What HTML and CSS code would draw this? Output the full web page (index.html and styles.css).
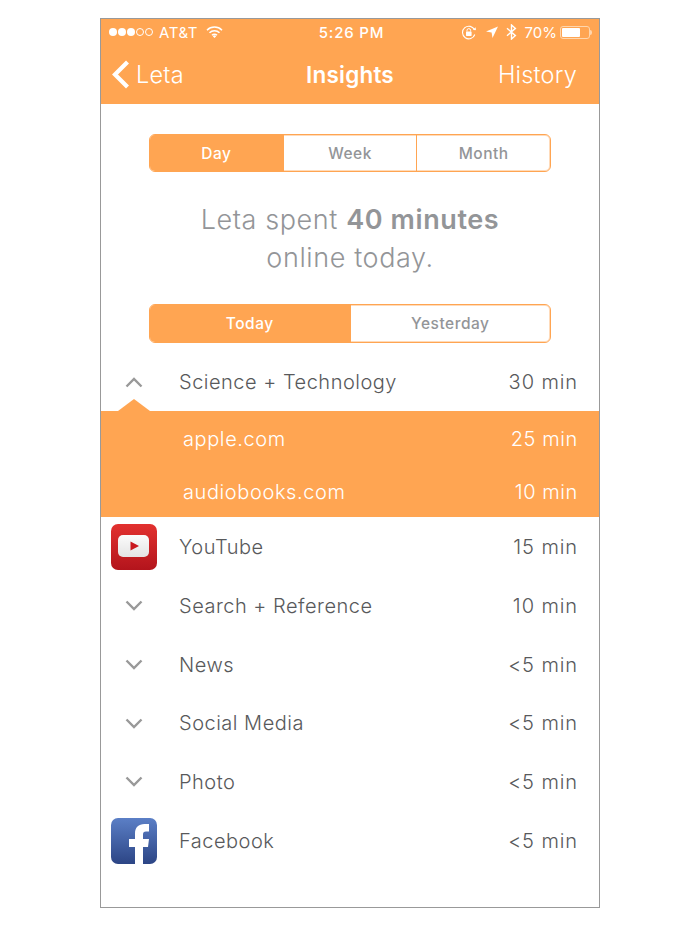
FILE: index.html
```html
<!DOCTYPE html>
<html lang="en">
<head>
    <meta charset="UTF-8">
    <meta name="viewport" content="width=device-width, initial-scale=1.0">
    <title>Insights</title>
    <link rel="stylesheet" href="styles.css">
</head>
<body>
    <div class="phone">
        <div class="header">
            <div class="status">
                <div class="status-left">
                    <span class="dots">
                        <i class="dot"></i><i class="dot"></i><i class="dot"></i><i class="dot off"></i><i class="dot off"></i>
                    </span>
                    <span class="carrier">AT&amp;T</span>
                    <svg class="wifi" width="17" height="12" viewBox="0 0 17 12">
                        <path d="M1 4.2a10.6 10.6 0 0 1 15 0M3.5 6.8a7 7 0 0 1 10 0M6 9.2a3.5 3.5 0 0 1 5 0" fill="none" stroke="#fff" stroke-width="1.5"/>
                        <path d="M8.5 12l-1.7-1.8a2.4 2.4 0 0 1 3.4 0z" fill="#fff"/>
                    </svg>
                </div>
                <div class="status-time">5:26 PM</div>
                <div class="status-right">
                    <svg width="16" height="15" viewBox="0 0 16 15">
                        <path d="M13.8 9.5A6.3 6.3 0 1 1 13.6 5" fill="none" stroke="#fff" stroke-width="1.1"/>
                        <path d="M12 4.6l3 .6-.4-3z" fill="#fff"/>
                        <rect x="5" y="6.5" width="5.6" height="4.4" rx=".6" fill="#fff"/>
                        <path d="M6 6.5V5.4a1.8 1.8 0 0 1 3.6 0v1.1" fill="none" stroke="#fff" stroke-width="1"/>
                    </svg>
                    <svg class="arrow" width="12" height="12" viewBox="0 0 12 12">
                        <path d="M12 .5L0 5.6l5.6.9.9 5.5z" fill="#fff"/>
                    </svg>
                    <svg class="bt" width="11" height="16" viewBox="0 0 11 16">
                        <path d="M1 4.2l8.4 7.4L5.5 15V1l3.9 3.4L1 11.8" fill="none" stroke="#fff" stroke-width="1.4"/>
                    </svg>
                    <span>70%</span>
                    <div class="battery"><div class="battery-fill"></div></div>
                </div>
            </div>
            <div class="nav">
                <div class="nav-back">
                    <svg width="19" height="29" viewBox="0 0 19 29">
                        <path d="M16.5 2L4 14.5 16.5 27" fill="none" stroke="#fff" stroke-width="4.2"/>
                    </svg>
                    <span>Leta</span>
                </div>
                <div class="nav-title">Insights</div>
                <div class="nav-link">History</div>
            </div>
        </div>

        <div class="seg seg-range">
            <div class="seg-item active">Day</div>
            <div class="seg-item">Week</div>
            <div class="seg-item">Month</div>
        </div>

        <p class="summary">Leta spent <strong>40 minutes</strong><br>online today.</p>

        <div class="seg seg-day">
            <div class="seg-item active">Today</div>
            <div class="seg-item">Yesterday</div>
        </div>

        <div class="list">
            <div class="row">
                <div class="row-icon">
                    <svg class="chevron" width="18" height="11" viewBox="0 0 18 11"><path d="M1.5 9.5L9 2l7.5 7.5"/></svg>
                </div>
                <span class="row-name">Science + Technology</span>
                <span class="row-time">30 min</span>
            </div>

            <div class="detail">
                <div class="detail-row"><span>apple.com</span><span>25 min</span></div>
                <div class="detail-row"><span>audiobooks.com</span><span>10 min</span></div>
            </div>

            <div class="rows-rest">
                <div class="row">
                    <div class="row-icon">
                        <svg width="46" height="46" viewBox="0 0 46 46">
                            <defs>
                                <linearGradient id="yt" x1="0" y1="0" x2="0" y2="1">
                                    <stop offset="0" stop-color="#e2312f"/>
                                    <stop offset="1" stop-color="#b3141c"/>
                                </linearGradient>
                                <linearGradient id="ytw" x1="0" y1="0" x2="0" y2="1">
                                    <stop offset="0" stop-color="#fbfbfb"/>
                                    <stop offset="1" stop-color="#e4e4e4"/>
                                </linearGradient>
                                <linearGradient id="fb" x1="0" y1="0" x2="0" y2="1">
                                    <stop offset="0" stop-color="#5b7fc6"/>
                                    <stop offset="1" stop-color="#2c4585"/>
                                </linearGradient>
                            </defs>
                            <rect width="46" height="46" rx="7" fill="url(#yt)"/>
                            <rect x="7" y="11" width="31" height="22" rx="5" fill="url(#ytw)"/>
                            <path d="M19.5 17.5l8.5 4.5-8.5 4.5z" fill="#c9171e"/>
                        </svg>
                    </div>
                    <span class="row-name">YouTube</span>
                    <span class="row-time">15 min</span>
                </div>
                <div class="row">
                    <div class="row-icon">
                        <svg class="chevron" width="18" height="11" viewBox="0 0 18 11"><path d="M1.5 1.5L9 9l7.5-7.5"/></svg>
                    </div>
                    <span class="row-name">Search + Reference</span>
                    <span class="row-time">10 min</span>
                </div>
                <div class="row">
                    <div class="row-icon">
                        <svg class="chevron" width="18" height="11" viewBox="0 0 18 11"><path d="M1.5 1.5L9 9l7.5-7.5"/></svg>
                    </div>
                    <span class="row-name">News</span>
                    <span class="row-time">&lt;5 min</span>
                </div>
                <div class="row">
                    <div class="row-icon">
                        <svg class="chevron" width="18" height="11" viewBox="0 0 18 11"><path d="M1.5 1.5L9 9l7.5-7.5"/></svg>
                    </div>
                    <span class="row-name">Social Media</span>
                    <span class="row-time">&lt;5 min</span>
                </div>
                <div class="row">
                    <div class="row-icon">
                        <svg class="chevron" width="18" height="11" viewBox="0 0 18 11"><path d="M1.5 1.5L9 9l7.5-7.5"/></svg>
                    </div>
                    <span class="row-name">Photo</span>
                    <span class="row-time">&lt;5 min</span>
                </div>
                <div class="row">
                    <div class="row-icon">
                        <svg width="46" height="46" viewBox="0 0 46 46">
                            <rect width="46" height="46" rx="7" fill="url(#fb)"/>
                            <path d="M24 46V29h-6v-8h6v-5.5C24 9.500 27.500 6 33.500 6H38v7.500h-3c-2.200 0-3 1-3 3V21h6l-1 8h-5v17z" fill="#fff"/>
                        </svg>
                    </div>
                    <span class="row-name">Facebook</span>
                    <span class="row-time">&lt;5 min</span>
                </div>
            </div>
        </div>
    </div>
</body>
</html>
```

FILE: styles.css
```css
body {
    margin: 0;
    background: #fff;
    font-family: Inter, "Open Sans", sans-serif;
    color: #58595b;
}
.phone {
    box-sizing: border-box;
    width: 500px;
    height: 890px;
    margin: 18px auto 0;
    border: 1px solid #999;
    overflow: hidden;
}
.header {
    background: #ffa552;
    color: #fff;
}
.status {
    height: 26px;
    padding: 0 5px 0 8px;
    display: grid;
    grid-template-columns: 1fr auto 1fr;
    align-items: center;
    font-size: 15px;
}
.status-left {
    display: flex;
    align-items: center;
    gap: 6px;
}
.carrier {
    letter-spacing: 0.6px;
}
.status-left .wifi {
    margin-left: 2px;
}
.dots {
    display: flex;
    gap: 1px;
}
.dot {
    box-sizing: border-box;
    width: 8px;
    height: 8px;
    border-radius: 50%;
    background: #fff;
}
.dot.off {
    background: none;
    border: 1px solid #fff;
}
.status-time {
    font-weight: 500;
    letter-spacing: 0.8px;
}
.status-right {
    display: flex;
    justify-content: flex-end;
    align-items: center;
    gap: 7px;
}
.status-right .arrow {
    margin-left: 2px;
}
.status-right .bt {
    margin-left: 1px;
    margin-right: 1px;
}
.battery {
    position: relative;
    box-sizing: border-box;
    width: 30px;
    height: 13px;
    margin-left: -4px;
    margin-right: 4px;
    padding: 1px;
    border: 1px solid #ffd6ad;
    border-radius: 3px;
}
.battery::after {
    content: "";
    position: absolute;
    right: -3px;
    top: 3px;
    width: 2px;
    height: 5px;
    background: #ffd6ad;
    border-radius: 0 2px 2px 0;
}
.battery-fill {
    width: 70%;
    height: 100%;
    background: #fff;
    border-radius: 1px;
}
.nav {
    height: 59px;
    padding: 0 10px;
    display: grid;
    grid-template-columns: 1fr auto 1fr;
    align-items: center;
    font-size: 23.5px;
    letter-spacing: 0.2px;
    font-weight: 300;
}
.nav-back {
    display: flex;
    align-items: center;
    gap: 6px;
}
.nav-title {
    font-weight: 600;
    font-size: 22.5px;
}
.nav-link {
    text-align: right;
    margin-right: 12px;
}
.seg {
    box-sizing: border-box;
    display: flex;
    width: 402px;
    margin: 0 auto;
    border: 1px solid #ffa552;
    border-radius: 6px;
    box-shadow: inset 0 0 0 1px rgba(255, 165, 82, 0.4);
    overflow: hidden;
    color: #939598;
    font-size: 15.5px;
    font-weight: 500;
    letter-spacing: 0.5px;
}
.seg-range {
    height: 38px;
    margin-top: 30px;
}
.seg-day {
    height: 39px;
}
.seg-item {
    flex: 1;
    display: flex;
    align-items: center;
    justify-content: center;
    border-left: 1px solid #ffa552;
}
.seg-item:first-child {
    border-left: 0;
}
.seg-item.active {
    background: #ffa552;
    color: #fff;
}
.summary {
    margin: 29px 0 27px;
    text-align: center;
    font-size: 27px;
    line-height: 38px;
    letter-spacing: 0.6px;
    font-weight: 300;
    color: #939598;
}
.summary strong {
    font-weight: 600;
}
.list {
    margin-top: 10px;
}
.row {
    height: 58.67px;
    padding: 0 21px 0 10px;
    display: flex;
    align-items: center;
    font-size: 20px;
    letter-spacing: 0.5px;
    font-weight: 300;
}
.list > .row {
    height: 58px;
}
.row-icon {
    width: 46px;
    height: 46px;
    margin-right: 22px;
    display: flex;
    align-items: center;
    justify-content: center;
}
.row-name {
    flex: 1;
}
.row-time {
    letter-spacing: 0.9px;
}
.chevron path {
    fill: none;
    stroke: #999;
    stroke-width: 2.4;
}
.detail {
    position: relative;
    background: #ffa552;
    color: #fff;
    padding-top: 1px;
    height: 106px;
    box-sizing: border-box;
}
.detail::before {
    content: "";
    position: absolute;
    left: 17px;
    top: -12px;
    width: 32px;
    height: 12px;
    background: #ffa552;
    clip-path: polygon(50% 0, 100% 100%, 0 100%);
}
.detail-row {
    height: 53px;
    padding: 0 21px 0 82px;
    display: flex;
    align-items: center;
    justify-content: space-between;
    font-size: 20px;
    letter-spacing: 0.6px;
    font-weight: 300;
}
.rows-rest {
    padding-top: 1px;
}
```
